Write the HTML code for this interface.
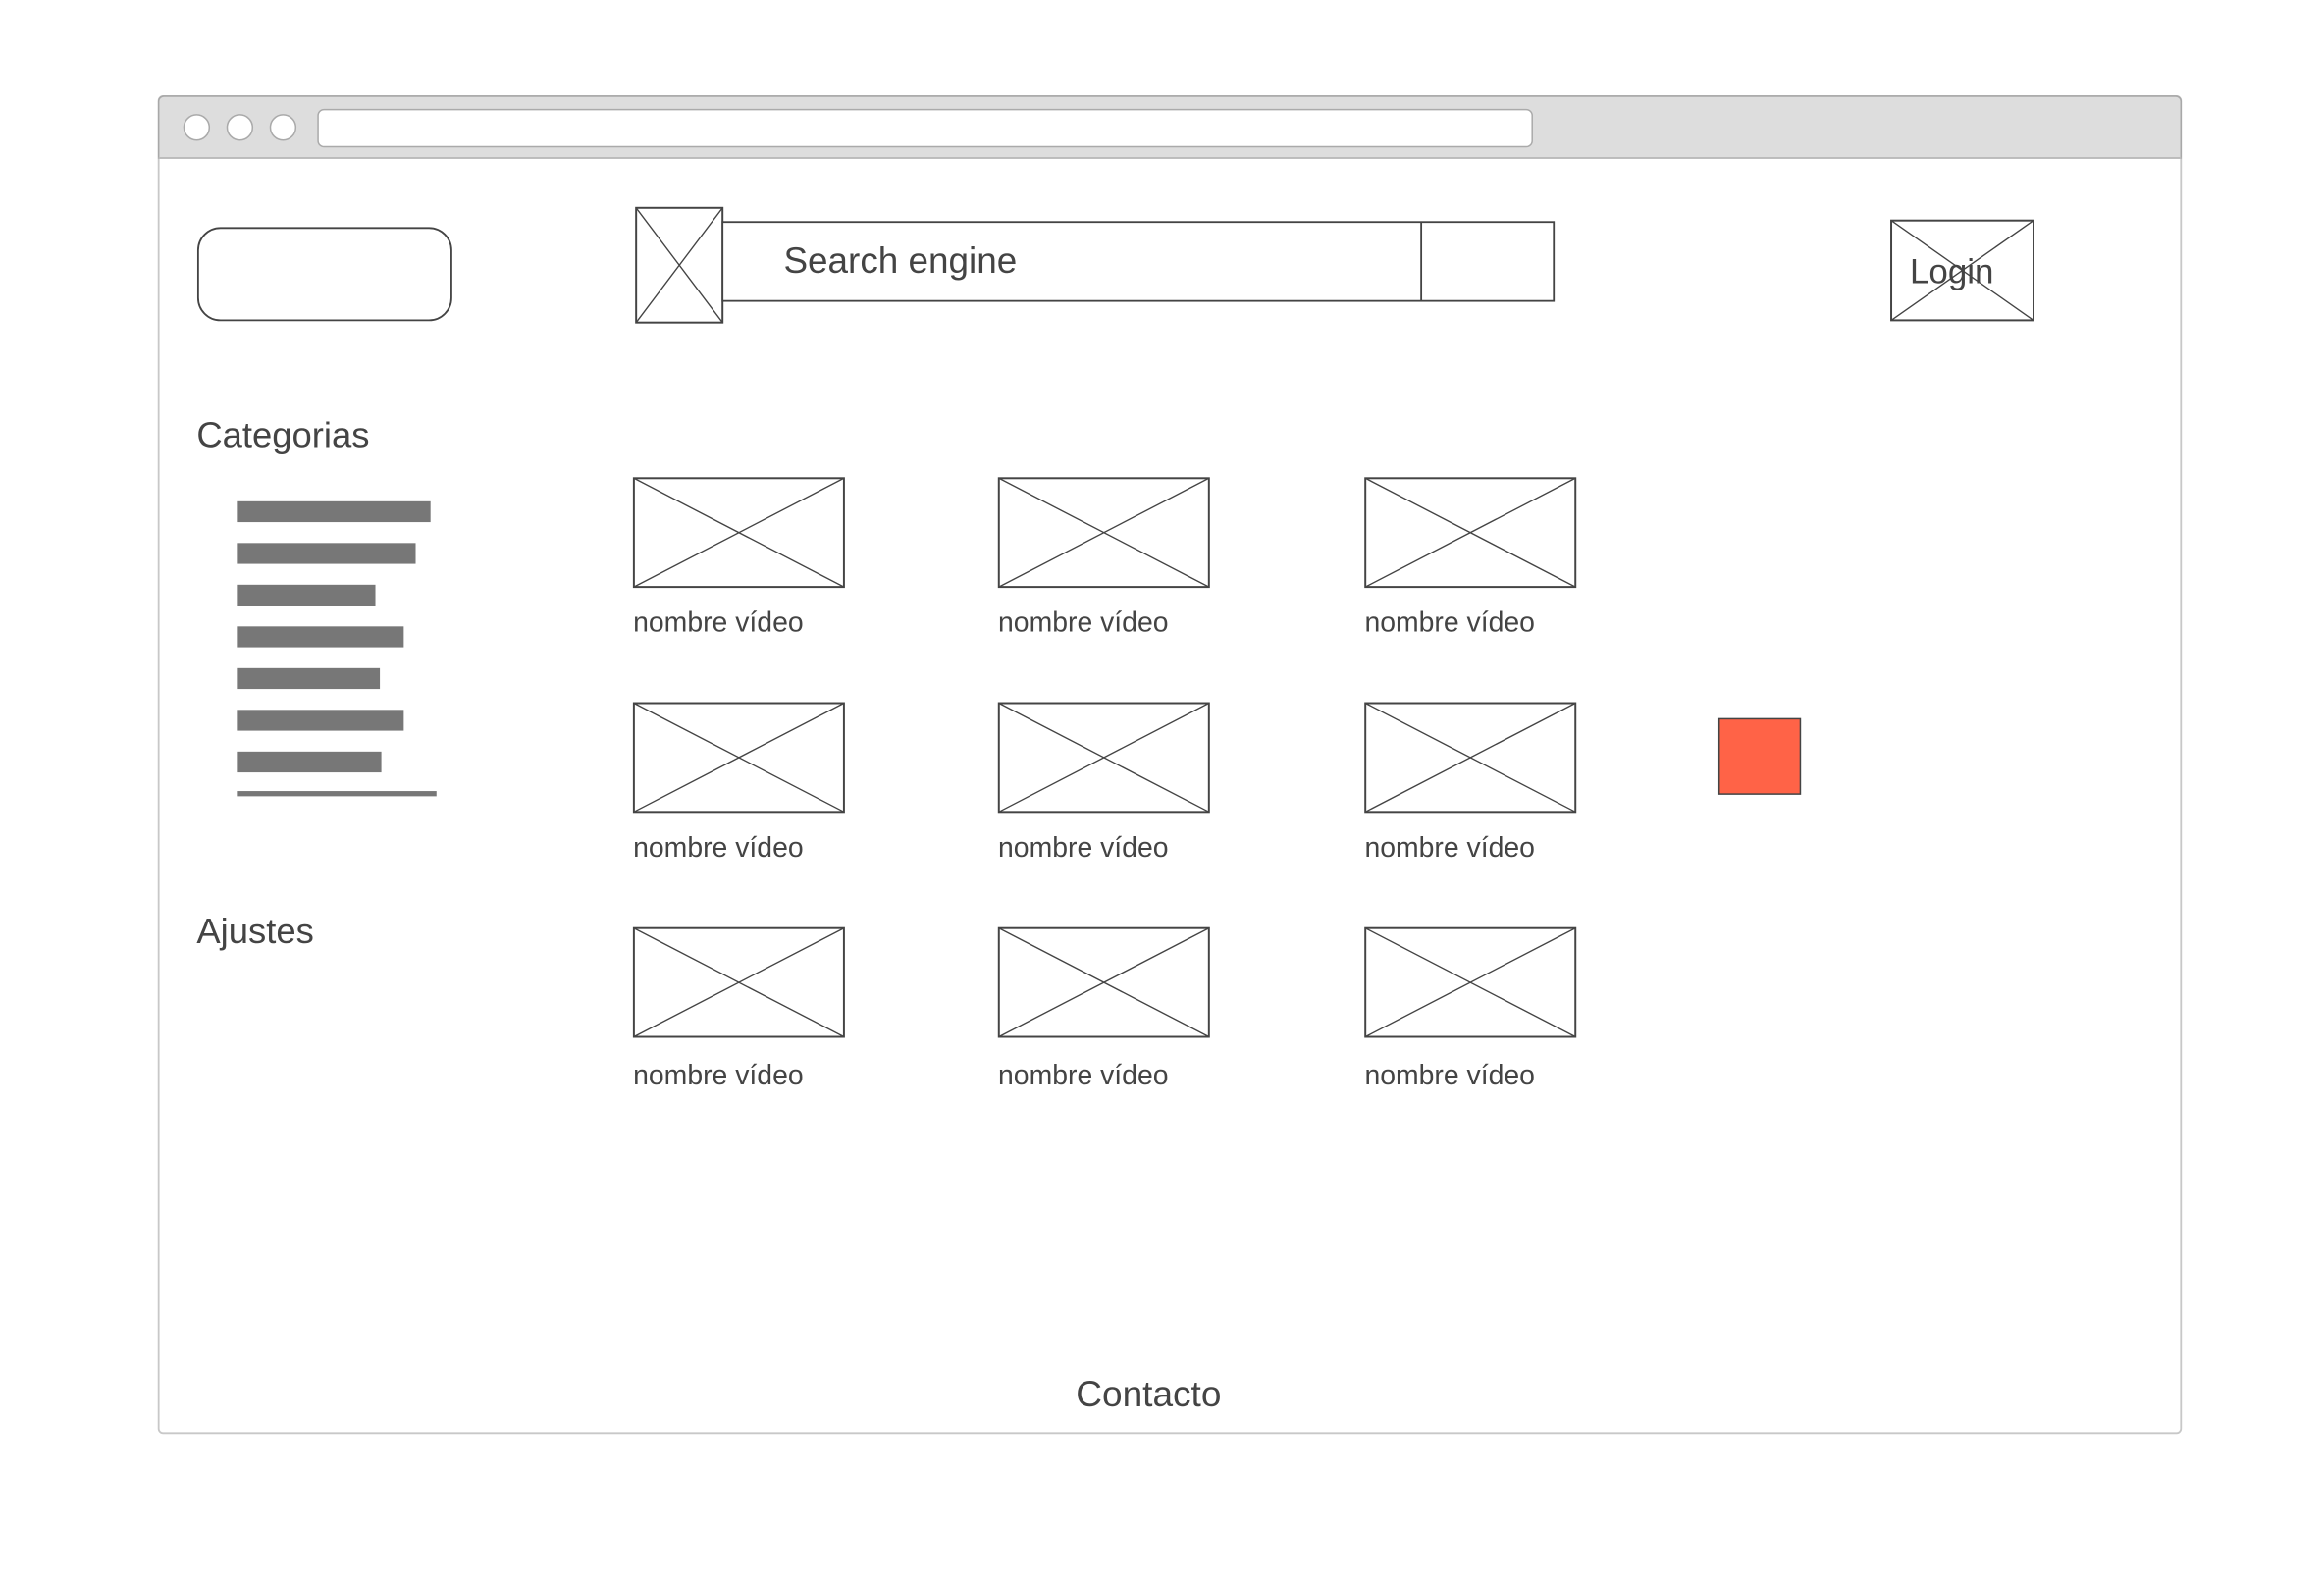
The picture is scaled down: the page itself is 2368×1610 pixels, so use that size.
<!DOCTYPE html>
<html><head><meta charset="utf-8"><style>
html,body{margin:0;padding:0;background:#fff;width:2368px;height:1610px;overflow:hidden}
svg{display:block}
text{font-family:"Liberation Sans",Arial,sans-serif;fill:#444}
</style></head><body>
<svg width="2368" height="1610" viewBox="0 0 1560 1060.6" xmlns="http://www.w3.org/2000/svg">
<defs>
<g id="img"><rect x="0" y="0" width="141" height="73" fill="#fff" stroke="#444" stroke-width="1.3"/><path d="M0 0L141 73M141 0L0 73" stroke="#444" stroke-width="0.9" fill="none"/></g>
</defs>
<rect x="106.5" y="64.5" width="1357.5" height="897.5" rx="3" fill="#fff" stroke="#c8c8c8" stroke-width="1.2"/>
<path d="M106.5 106V68a3.5 3.5 0 0 1 3.5-3.5h1350.5a3.5 3.5 0 0 1 3.5 3.5V106Z" fill="#ddd" stroke="#a8a8a8" stroke-width="1"/>
<line x1="106.5" y1="106" x2="1464" y2="106" stroke="#bbb" stroke-width="1.2"/>
<circle cx="132" cy="85.5" r="8.5" fill="#fff" stroke="#aaa" stroke-width="1"/>
<circle cx="161" cy="85.5" r="8.5" fill="#fff" stroke="#aaa" stroke-width="1"/>
<circle cx="190" cy="85.5" r="8.5" fill="#fff" stroke="#aaa" stroke-width="1"/>
<rect x="213.5" y="73.5" width="815" height="25" rx="4" fill="#fff" stroke="#aaa" stroke-width="1"/>
<rect x="133" y="153" width="170" height="62" rx="15" fill="#fff" stroke="#444" stroke-width="1.2"/>
<rect x="427" y="139.5" width="58" height="77" fill="#fff" stroke="#444" stroke-width="1.3"/>
<path d="M427 139.5L485 216.5M485 139.5L427 216.5" stroke="#444" stroke-width="0.9"/>
<rect x="485" y="149" width="558" height="53" fill="#fff" stroke="#444" stroke-width="1.2"/>
<line x1="954" y1="149" x2="954" y2="202" stroke="#444" stroke-width="1.2"/>
<text x="526" y="183" font-size="24.3">Search engine</text>
<rect x="1269.5" y="148" width="95.5" height="67" fill="#fff" stroke="#444" stroke-width="1.3"/>
<path d="M1269.5 148L1365 215M1365 148L1269.5 215" stroke="#444" stroke-width="0.9"/>
<text x="1282" y="190" font-size="23">Login</text>
<text x="132" y="300" font-size="24">Categorias</text>
<g fill="#777">
<rect x="159" y="336.5" width="130" height="14"/>
<rect x="159" y="364.5" width="120" height="14"/>
<rect x="159" y="392.5" width="93" height="14"/>
<rect x="159" y="420.5" width="112" height="14"/>
<rect x="159" y="448.5" width="96" height="14"/>
<rect x="159" y="476.5" width="112" height="14"/>
<rect x="159" y="504.5" width="97" height="14"/>
<rect x="159" y="531" width="134" height="3.5"/>
</g>
<text x="132" y="633" font-size="24">Ajustes</text>
<use href="#img" x="425.5" y="321"/><use href="#img" x="670.5" y="321"/><use href="#img" x="916.5" y="321"/>
<use href="#img" x="425.5" y="472"/><use href="#img" x="670.5" y="472"/><use href="#img" x="916.5" y="472"/>
<use href="#img" x="425.5" y="623"/><use href="#img" x="670.5" y="623"/><use href="#img" x="916.5" y="623"/>
<g font-size="18.7">
<text x="425" y="424">nombre vídeo</text><text x="670" y="424">nombre vídeo</text><text x="916" y="424">nombre vídeo</text>
<text x="425" y="575">nombre vídeo</text><text x="670" y="575">nombre vídeo</text><text x="916" y="575">nombre vídeo</text>
<text x="425" y="728">nombre vídeo</text><text x="670" y="728">nombre vídeo</text><text x="916" y="728">nombre vídeo</text>
</g>
<rect x="1154" y="482.5" width="54.5" height="50.5" fill="#ff6347" stroke="#444" stroke-width="1"/>
<text x="771" y="944" font-size="24.4" text-anchor="middle">Contacto</text>
</svg>
</body></html>
